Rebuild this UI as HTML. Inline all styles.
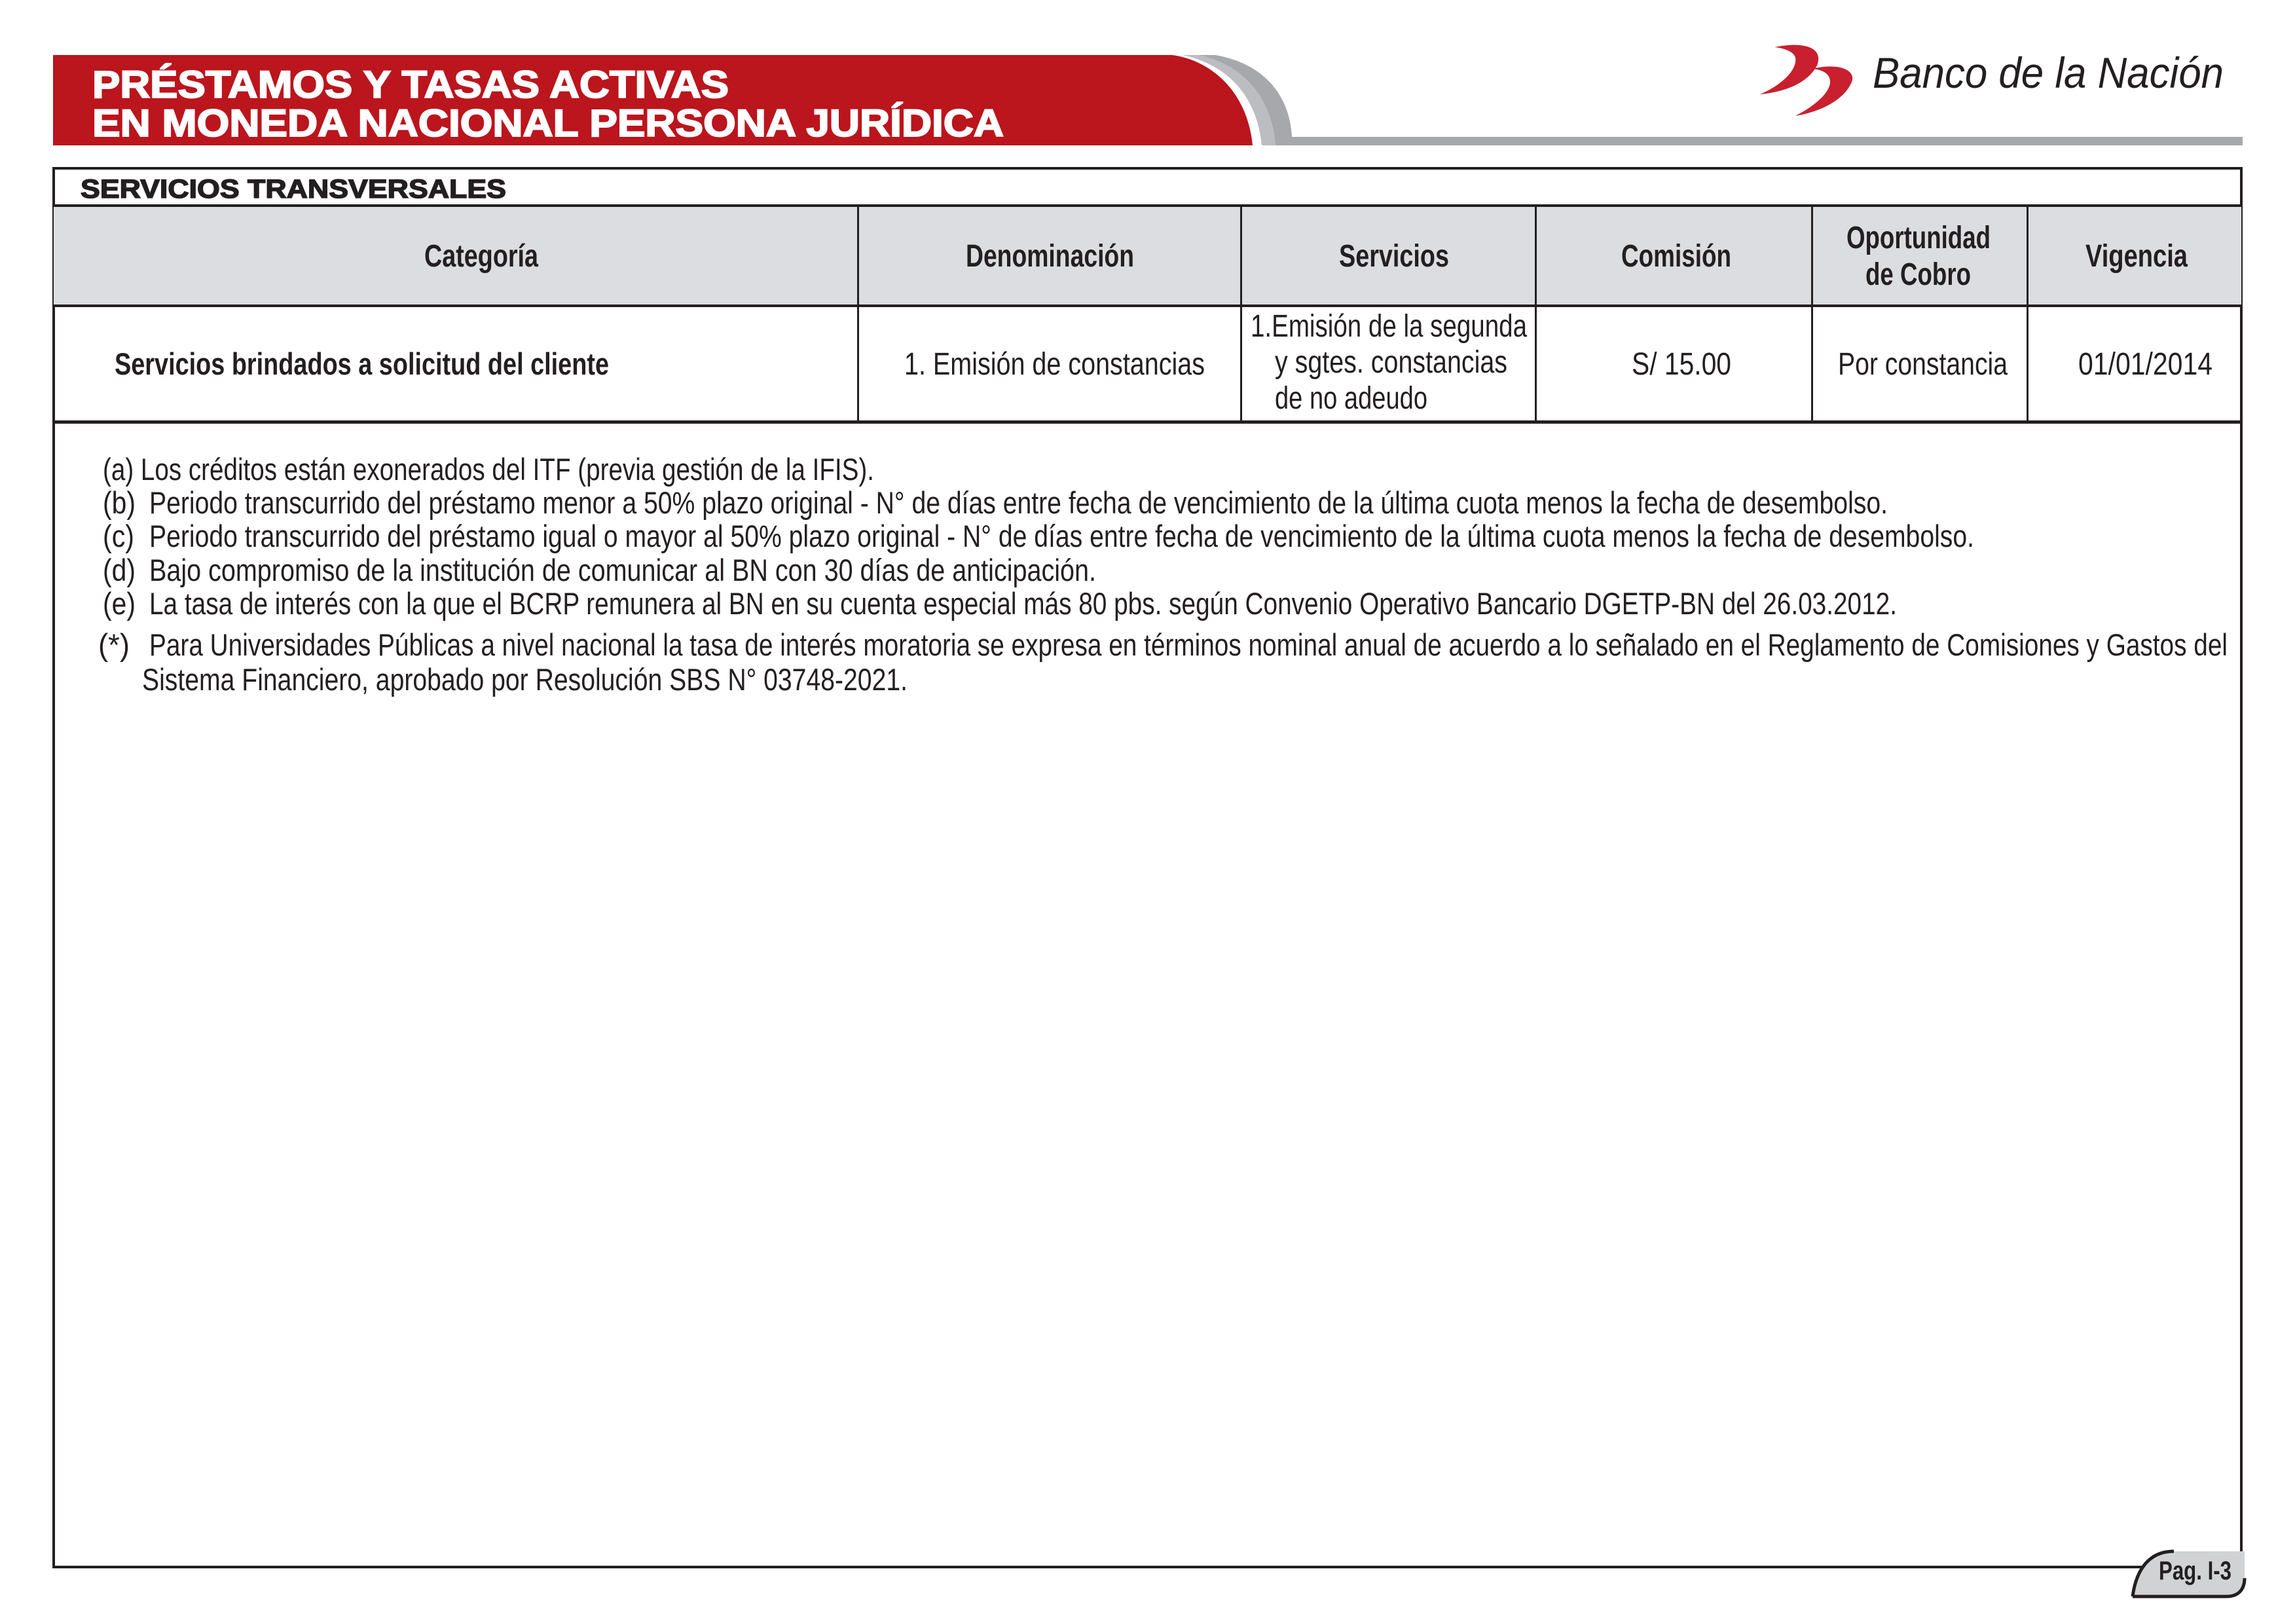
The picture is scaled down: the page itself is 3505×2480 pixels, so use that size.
<!DOCTYPE html>
<html><head><meta charset="utf-8"><style>
html,body{margin:0;padding:0;background:#fff;}
svg{display:block;}
.n{font-family:"Liberation Sans Narrow","Liberation Sans",sans-serif;fill:#231f20;}
.b{font-weight:bold;}
</style></head><body>
<svg width="3505" height="2480" viewBox="0 0 3505 2480" xmlns="http://www.w3.org/2000/svg">
<rect width="3505" height="2480" fill="#fff"/>
<!-- header banner -->
<path d="M1828,84 H1856 C1935,98 1970,150 1973,209 H3425 V222 H1948 C1942,150 1900,98 1828,84 Z" fill="#a7a8ab"/>
<path d="M1806,84 H1830 C1900,98 1942,150 1948,222 H1927 C1920,152 1880,100 1806,84 Z" fill="#bcbdc0"/>
<path d="M81,84 H1790 C1850,92 1905,140 1913,222 H81 Z" fill="#bb151d"/>
<text x="141" y="149" font-family="Liberation Sans,sans-serif" font-weight="bold" font-size="58" fill="#fff" stroke="#fff" stroke-width="2" textLength="972" lengthAdjust="spacingAndGlyphs">PRÉSTAMOS Y TASAS ACTIVAS</text>
<text x="141" y="208" font-family="Liberation Sans,sans-serif" font-weight="bold" font-size="58" fill="#fff" stroke="#fff" stroke-width="2" textLength="1392" lengthAdjust="spacingAndGlyphs">EN MONEDA NACIONAL PERSONA JURÍDICA</text>
<!-- logo -->
<path d="M2710,72 C2760,62 2785,75 2775,100 C2762,125 2730,140 2688,144 C2725,128 2745,105 2742,88 C2740,80 2728,74 2710,72 Z" fill="#c8202f"/>
<path d="M2768,105 C2810,95 2835,108 2828,125 C2818,150 2785,170 2742,177 C2775,160 2795,140 2795,125 C2795,113 2785,107 2768,105 Z" fill="#c8202f"/>
<text x="2860" y="134" font-family="Liberation Sans,sans-serif" font-style="italic" font-size="66" fill="#231f20" textLength="536" lengthAdjust="spacingAndGlyphs">Banco de la Nación</text>
<!-- table frame -->
<rect x="82" y="257" width="3341" height="2136" fill="none" stroke="#231f20" stroke-width="4"/>
<rect x="82" y="316" width="3341" height="150" fill="#dcdde0"/>
<rect x="80" y="312" width="3345" height="4" fill="#231f20"/>
<rect x="80" y="465" width="3345" height="4" fill="#231f20"/>
<rect x="80" y="642" width="3345" height="5" fill="#231f20"/>
<g fill="#231f20">
<rect x="1309" y="316" width="3" height="327"/>
<rect x="1894" y="316" width="3" height="327"/>
<rect x="2344" y="316" width="3" height="327"/>
<rect x="2766" y="316" width="3" height="327"/>
<rect x="3095" y="316" width="3" height="327"/>
</g>
<text class="n b" x="123" y="302" font-size="40" stroke="#231f20" stroke-width="1.5" textLength="650" lengthAdjust="spacingAndGlyphs">SERVICIOS TRANSVERSALES</text>
<!-- header cells -->
<g class="n b" font-size="48">
<text x="648" y="407" textLength="174" lengthAdjust="spacingAndGlyphs">Categoría</text>
<text x="1475" y="407" textLength="257" lengthAdjust="spacingAndGlyphs">Denominación</text>
<text x="2045" y="407" textLength="168" lengthAdjust="spacingAndGlyphs">Servicios</text>
<text x="2476" y="407" textLength="168" lengthAdjust="spacingAndGlyphs">Comisión</text>
<text x="2820" y="379" textLength="220" lengthAdjust="spacingAndGlyphs">Oportunidad</text>
<text x="2849" y="435" textLength="161" lengthAdjust="spacingAndGlyphs">de Cobro</text>
<text x="3185" y="407" textLength="156" lengthAdjust="spacingAndGlyphs">Vigencia</text>
</g>
<!-- data row -->
<text class="n b" x="175" y="572" font-size="47" textLength="755" lengthAdjust="spacingAndGlyphs">Servicios brindados a solicitud del cliente</text>
<g class="n" font-size="48">
<text x="1381" y="572" textLength="459" lengthAdjust="spacingAndGlyphs">1. Emisión de constancias</text>
<text x="1910" y="514" textLength="422" lengthAdjust="spacingAndGlyphs">1.Emisión de la segunda</text>
<text x="1947" y="569" textLength="355" lengthAdjust="spacingAndGlyphs">y sgtes. constancias</text>
<text x="1947" y="624" textLength="233" lengthAdjust="spacingAndGlyphs">de no adeudo</text>
<text x="2492" y="572" textLength="152" lengthAdjust="spacingAndGlyphs">S/ 15.00</text>
<text x="2807" y="572" textLength="259" lengthAdjust="spacingAndGlyphs">Por constancia</text>
<text x="3174" y="572" textLength="205" lengthAdjust="spacingAndGlyphs">01/01/2014</text>
</g>
<!-- footnotes -->
<g class="n" font-size="47">
<text x="157" y="733" textLength="1178" lengthAdjust="spacingAndGlyphs">(a) Los créditos están exonerados del ITF (previa gestión de la IFIS).</text>
<text x="157" y="784" textLength="50" lengthAdjust="spacingAndGlyphs">(b)</text>
<text x="228" y="784" textLength="2655" lengthAdjust="spacingAndGlyphs">Periodo transcurrido del préstamo menor a 50% plazo original - N° de días entre fecha de vencimiento de la última cuota menos la fecha de desembolso.</text>
<text x="157" y="835" textLength="48" lengthAdjust="spacingAndGlyphs">(c)</text>
<text x="228" y="835" textLength="2787" lengthAdjust="spacingAndGlyphs">Periodo transcurrido del préstamo igual o mayor al 50% plazo original - N° de días entre fecha de vencimiento de la última cuota menos la fecha de desembolso.</text>
<text x="157" y="887" textLength="50" lengthAdjust="spacingAndGlyphs">(d)</text>
<text x="228" y="887" textLength="1446" lengthAdjust="spacingAndGlyphs">Bajo compromiso de la institución de comunicar al BN con 30 días de anticipación.</text>
<text x="157" y="938" textLength="50" lengthAdjust="spacingAndGlyphs">(e)</text>
<text x="228" y="938" textLength="2669" lengthAdjust="spacingAndGlyphs">La tasa de interés con la que el BCRP remunera al BN en su cuenta especial más 80 pbs. según Convenio Operativo Bancario DGETP-BN del 26.03.2012.</text>
<text x="150" y="1001" textLength="48" lengthAdjust="spacingAndGlyphs">(*)</text>
<text x="228" y="1001" textLength="3174" lengthAdjust="spacingAndGlyphs">Para Universidades Públicas a nivel nacional la tasa de interés moratoria se expresa en términos nominal anual de acuerdo a lo señalado en el Reglamento de Comisiones y Gastos del</text>
<text x="217" y="1054" textLength="1169" lengthAdjust="spacingAndGlyphs">Sistema Financiero, aprobado por Resolución SBS N° 03748-2021.</text>
</g>
<!-- page tag -->
<path d="M3257,2438 C3262,2400 3280,2369 3320,2369 H3428 V2410 C3428,2428 3418,2438 3400,2438 Z" fill="#d1d2d4"/>
<path d="M3257,2438 C3262,2400 3280,2369 3320,2369 M3257,2438 H3400 C3418,2438 3428,2428 3428,2410" fill="none" stroke="#231f20" stroke-width="5"/>
<text class="n b" x="3297" y="2412" font-size="40" textLength="111" lengthAdjust="spacingAndGlyphs">Pag. I-3</text>
</svg>
</body></html>
